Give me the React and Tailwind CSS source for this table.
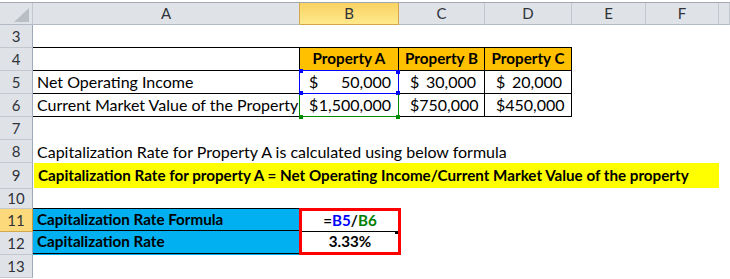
const COLS = "grid grid-cols-[33px_267px_99px_86px_87px_74px_73px_11px]";

const RowHead = ({ n, active }) => (
    <div
        className={`flex items-center justify-center border-r border-b text-[15px] text-[#2f3339] ${
            active
                ? "bg-[#fcd97b] border-r-[#c99b3c] border-b-[#d3a84a]"
                : "bg-[#dfe3e8] border-r-[#9eaab8] border-b-[#c3c8cf]"
        }`}
    >
        {n}
    </div>
);

const ColHead = ({ label, active, className = "" }) => (
    <div
        className={`flex items-center justify-center border-b text-[15px] text-[#2f3339] ${
            active
                ? "bg-gradient-to-b from-[#f9d262] to-[#ffe98c] border-r border-r-[#d3a84a] border-b-[#d3a84a]"
                : "bg-[#dfe3e8] border-r border-r-[#c3c8cf] border-b-[#b3bac3]"
        } ${className}`}
    >
        {label}
    </div>
);

const Money = ({ value, className = "" }) => (
    <div className={`flex items-center justify-between pl-[9px] pr-[7px] ${className}`}>
        <span>$</span>
        <span>{value}</span>
    </div>
);

const Corner = ({ className }) => <div className={`absolute w-[4px] h-[4px] ${className}`} />;

const App = () => {
    return (
        <div className="w-[730px] h-[279px] overflow-hidden bg-white font-[Lato,sans-serif] text-[16px] text-black leading-none">
            {/* column headers */}
            <div className="pt-[2px]">
                <div className={`${COLS} h-[23px] border-t border-[#a3a8ae]`}>
                    <div className="relative bg-[#dfe3e8] border-r border-b border-r-[#c3c8cf] border-b-[#b3bac3]">
                        <svg className="absolute right-[3px] bottom-[2px]" width="15" height="14" viewBox="0 0 15 14">
                            <polygon points="15,0 15,14 0,14" fill="#b9bec5" />
                        </svg>
                    </div>
                    <ColHead label="A" className="border-r-[#d3a84a]" />
                    <ColHead label="B" active />
                    <ColHead label="C" />
                    <ColHead label="D" />
                    <ColHead label="E" />
                    <ColHead label="F" />
                    <ColHead label="" />
                </div>
            </div>

            {/* row 3 */}
            <div className={`${COLS} h-[23px]`}>
                <RowHead n={3} />
                <div className="border-b border-black" />
                <div className="border-b border-black" />
                <div className="border-b border-black" />
                <div className="border-b border-black" />
                <div />
                <div />
                <div />
            </div>

            {/* row 4 */}
            <div className={`${COLS} h-[23px]`}>
                <RowHead n={4} />
                <div className="border-r border-b border-black" />
                <div className="flex items-center justify-center bg-[#ffc000] font-bold text-[15.2px] border-r border-b border-r-black border-b-[#0000ff]">
                    Property A
                </div>
                <div className="flex items-center justify-center bg-[#ffc000] font-bold text-[15.2px] border-r border-b border-black">
                    Property B
                </div>
                <div className="flex items-center justify-center bg-[#ffc000] font-bold text-[15.2px] border-r border-b border-black">
                    Property C
                </div>
                <div />
                <div />
                <div />
            </div>

            {/* row 5 */}
            <div className={`${COLS} h-[23px]`}>
                <RowHead n={5} />
                <div className="flex items-center pl-[4px] whitespace-nowrap border-r border-b border-r-[#0000ff] border-b-black">
                    Net Operating Income
                </div>
                <div className="relative">
                    <Money value="50,000" className="h-full border-r border-b border-[#0000ff]" />
                    <Corner className="-left-[1px] -top-[2px] bg-[#0000ff]" />
                    <Corner className="-left-[1px] -bottom-[1px] bg-[#0000ff]" />
                    <Corner className="-right-[1px] -top-[1px] bg-[#0000ff]" />
                    <Corner className="-right-[1px] -bottom-[1px] bg-[#0000ff]" />
                </div>
                <Money value="30,000" className="pl-[11px] pr-[8px] border-r border-b border-black" />
                <Money value="20,000" className="pl-[11px] pr-[9px] border-r border-b border-black" />
                <div />
                <div />
                <div />
            </div>

            {/* row 6 */}
            <div className={`${COLS} h-[23px]`}>
                <RowHead n={6} />
                <div className="flex items-center pl-[4px] whitespace-nowrap border-r border-b border-r-[#008a00] border-b-black">
                    Current Market Value of the Property
                </div>
                <div className="relative">
                    <Money value="1,500,000" className="h-full border-r border-b border-[#008a00]" />
                    <Corner className="-left-[1px] -bottom-[2px] bg-[#008a00]" />
                    <Corner className="-right-[1px] -bottom-[2px] bg-[#008a00]" />
                </div>
                <Money value="750,000" className="pl-[11px] pr-[8px] border-r border-b border-black" />
                <Money value="450,000" className="pl-[11px] pr-[9px] border-r border-b border-black" />
                <div />
                <div />
                <div />
            </div>

            {/* row 7 */}
            <div className={`${COLS} h-[23px]`}>
                <RowHead n={7} />
            </div>

            {/* row 8 */}
            <div className={`${COLS} h-[23px]`}>
                <RowHead n={8} />
                <div className="flex items-center pl-[4px] whitespace-nowrap">
                    Capitalization Rate for Property A is calculated using below formula
                </div>
            </div>

            {/* row 9 */}
            <div className={`${COLS} h-[26px]`}>
                <RowHead n={9} />
                <div className="col-span-6 flex items-center pl-[4px] whitespace-nowrap bg-[#ffff00] font-bold text-[15.2px] border-l border-b border-white">
                    Capitalization Rate for property A = Net Operating Income/Current Market Value of the property
                </div>
            </div>

            {/* row 10 */}
            <div className={`${COLS} h-[20px]`}>
                <RowHead n={10} />
            </div>

            {/* rows 11-12 */}
            <div className={`${COLS} h-[46px]`}>
                <div className="flex flex-col">
                    <div className="flex h-[23px] flex-col [&>div]:flex-1">
                        <RowHead n={11} active />
                    </div>
                    <div className="flex h-[23px] flex-col [&>div]:flex-1">
                        <RowHead n={12} />
                    </div>
                </div>
                <div className="flex flex-col bg-[#00b0f0] font-bold text-[15.2px]">
                    <div className="flex h-[23px] items-center pl-[4px] border-t border-b border-black -mt-px">
                        Capitalization Rate Formula
                    </div>
                    <div className="flex h-[23px] items-center pl-[4px] border-b border-black">
                        Capitalization Rate
                    </div>
                </div>
                <div className="relative -ml-px -mt-px -mr-[2px] flex flex-col border-[3px] border-[#ff0000] font-bold text-[15.2px]">
                    <div className="flex flex-1 items-center justify-center border-b border-black">
                        =<span className="text-[#0000ff]">B5</span>/<span className="text-[#008000]">B6</span>
                    </div>
                    <div className="flex flex-1 items-center justify-center">3.33%</div>
                    <div className="absolute right-0 top-[20px] w-[3px] h-[3px] bg-black" />
                </div>
                <div />
                <div />
                <div />
                <div />
                <div />
            </div>

            {/* row 13 */}
            <div className={`${COLS} h-[23px]`}>
                <RowHead n={13} />
            </div>
        </div>
    );
};

export default App;
